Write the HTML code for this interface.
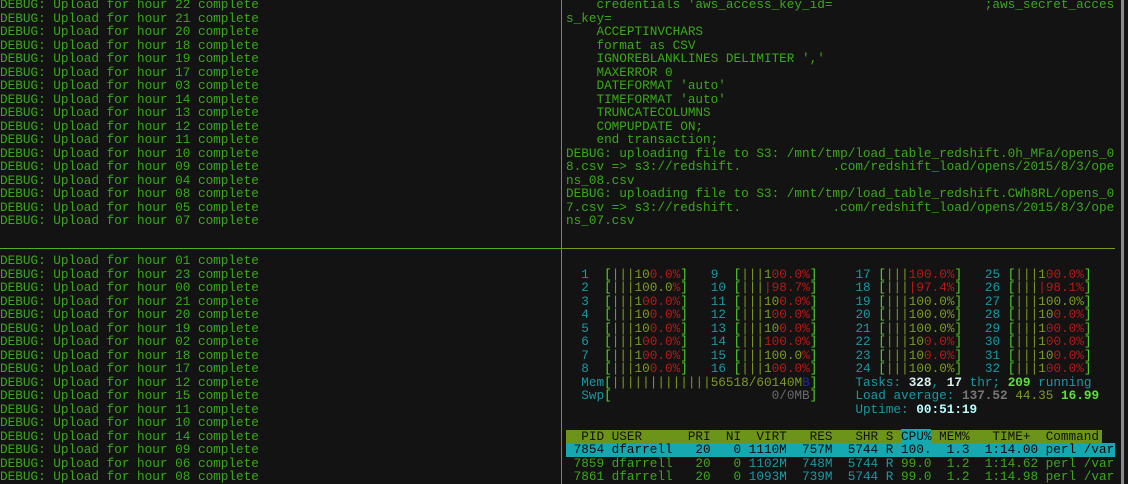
<!DOCTYPE html>
<html><head><meta charset="utf-8"><style>
html,body{margin:0;padding:0;background:#131313;width:1128px;height:484px;overflow:hidden}
.p{position:absolute;font-family:"Liberation Mono",monospace;font-size:12.7px;line-height:13.5px;white-space:pre;color:#3aa81a}
b,i,u,s,em,strong{font-weight:normal;font-style:normal;text-decoration:none}
b{color:#55d22a} i{color:#7c9a22} u{color:#b81818} .c{color:#1a98a3} .t{color:#1a98a3}
.wb{color:#d8f0f0;font-weight:bold} .gb{color:#5ee03a;font-weight:bold} .gr{color:#777;font-weight:bold} .ol{color:#7c9a22} .bl{color:#1a2a9a} .gy{color:#6a6a6a}
.hdr{background:#6c9418;color:#111;display:inline-block;width:536px}
.hdr .cp{background:#16a8b0}
.sel{background:#16a8b0;color:#0a0a0a;display:inline-block;width:549px}
</style></head><body>
<div style="position:absolute;left:561px;top:0;width:1px;height:484px;background:#6a9a1a"></div>
<div style="position:absolute;left:0;top:248px;width:561px;height:1px;background:#4cb31c"></div>
<div style="position:absolute;left:562px;top:248px;width:553px;height:1px;background:#7a9a1e"></div>
<div style="position:absolute;left:1121px;top:0;width:3px;height:484px;background:#8a8a8a"></div>

<div class="p" style="left:0;top:-1.75px">DEBUG: Upload for hour 22 complete
DEBUG: Upload for hour 21 complete
DEBUG: Upload for hour 20 complete
DEBUG: Upload for hour 18 complete
DEBUG: Upload for hour 19 complete
DEBUG: Upload for hour 17 complete
DEBUG: Upload for hour 03 complete
DEBUG: Upload for hour 14 complete
DEBUG: Upload for hour 13 complete
DEBUG: Upload for hour 12 complete
DEBUG: Upload for hour 11 complete
DEBUG: Upload for hour 10 complete
DEBUG: Upload for hour 09 complete
DEBUG: Upload for hour 04 complete
DEBUG: Upload for hour 08 complete
DEBUG: Upload for hour 05 complete
DEBUG: Upload for hour 07 complete</div>

<div class="p" style="left:566px;top:-1.75px">    credentials 'aws_access_key_id=                    ;aws_secret_acces
s_key=
    ACCEPTINVCHARS
    format as CSV
    IGNOREBLANKLINES DELIMITER ','
    MAXERROR 0
    DATEFORMAT 'auto'
    TIMEFORMAT 'auto'
    TRUNCATECOLUMNS
    COMPUPDATE ON;
    end transaction;
DEBUG: uploading file to S3: /mnt/tmp/load_table_redshift.0h_MFa/opens_0
8.csv =&gt; s3://redshift.            .com/redshift_load/opens/2015/8/3/ope
ns_08.csv
DEBUG: uploading file to S3: /mnt/tmp/load_table_redshift.CWh8RL/opens_0
7.csv =&gt; s3://redshift.            .com/redshift_load/opens/2015/8/3/ope
ns_07.csv</div>

<div class="p" style="left:0;top:254.25px">DEBUG: Upload for hour 01 complete
DEBUG: Upload for hour 23 complete
DEBUG: Upload for hour 00 complete
DEBUG: Upload for hour 21 complete
DEBUG: Upload for hour 20 complete
DEBUG: Upload for hour 19 complete
DEBUG: Upload for hour 02 complete
DEBUG: Upload for hour 18 complete
DEBUG: Upload for hour 17 complete
DEBUG: Upload for hour 12 complete
DEBUG: Upload for hour 15 complete
DEBUG: Upload for hour 11 complete
DEBUG: Upload for hour 10 complete
DEBUG: Upload for hour 14 complete
DEBUG: Upload for hour 09 complete
DEBUG: Upload for hour 06 complete
DEBUG: Upload for hour 08 complete</div>

<div class="p" style="left:566px;top:254.25px">
<span class="c">  1  </span><b>[</b><i>|||10</i><u>0.0%</u><b>]</b>   <span class="c">9  </span><b>[</b><i>|||1</i><u>00.0%</u><b>]</b>     <span class="c">17 </span><b>[</b><i>|||</i><u>100.0%</u><b>]</b>   <span class="c">25 </span><b>[</b><i>|||1</i><u>00.0%</u><b>]</b>
<span class="c">  2  </span><b>[</b><i>|||100.0</i><u>%</u><b>]</b>   <span class="c">10 </span><b>[</b><i>|||</i><u>|98.7%</u><b>]</b>     <span class="c">18 </span><b>[</b><i>|||</i><u>|97.4%</u><b>]</b>   <span class="c">26 </span><b>[</b><i>|||</i><u>|98.1%</u><b>]</b>
<span class="c">  3  </span><b>[</b><i>|||1</i><u>00.0%</u><b>]</b>   <span class="c">11 </span><b>[</b><i>|||10</i><u>0.0%</u><b>]</b>     <span class="c">19 </span><b>[</b><i>|||100.0%</i><b>]</b>   <span class="c">27 </span><b>[</b><i>|||100.0%</i><b>]</b>
<span class="c">  4  </span><b>[</b><i>|||10</i><u>0.0%</u><b>]</b>   <span class="c">12 </span><b>[</b><i>|||1</i><u>00.0%</u><b>]</b>     <span class="c">20 </span><b>[</b><i>|||100.0%</i><b>]</b>   <span class="c">28 </span><b>[</b><i>|||10</i><u>0.0%</u><b>]</b>
<span class="c">  5  </span><b>[</b><i>|||10</i><u>0.0%</u><b>]</b>   <span class="c">13 </span><b>[</b><i>|||10</i><u>0.0%</u><b>]</b>     <span class="c">21 </span><b>[</b><i>|||100.0%</i><b>]</b>   <span class="c">29 </span><b>[</b><i>|||1</i><u>00.0%</u><b>]</b>
<span class="c">  6  </span><b>[</b><i>|||1</i><u>00.0%</u><b>]</b>   <span class="c">14 </span><b>[</b><i>|||</i><u>100.0%</u><b>]</b>     <span class="c">22 </span><b>[</b><i>|||10</i><u>0.0%</u><b>]</b>   <span class="c">30 </span><b>[</b><i>|||1</i><u>00.0%</u><b>]</b>
<span class="c">  7  </span><b>[</b><i>|||1</i><u>00.0%</u><b>]</b>   <span class="c">15 </span><b>[</b><i>|||100.0</i><u>%</u><b>]</b>     <span class="c">23 </span><b>[</b><i>|||10</i><u>0.0%</u><b>]</b>   <span class="c">31 </span><b>[</b><i>|||10</i><u>0.0%</u><b>]</b>
<span class="c">  8  </span><b>[</b><i>|||10</i><u>0.0%</u><b>]</b>   <span class="c">16 </span><b>[</b><i>|||1</i><u>00.0%</u><b>]</b>     <span class="c">24 </span><b>[</b><i>|||100.0%</i><b>]</b>   <span class="c">32 </span><b>[</b><i>|||1</i><u>00.0%</u><b>]</b>
<span class="c">  Mem</span><b>[</b><i>|||||||||||||</i><span class="ol">56518/60140M</span><span class="bl">B</span><b>]</b>     <span class="t">Tasks: </span><span class="wb">328</span><span class="t">, </span><span class="wb">17</span><span class="t"> thr; </span><span class="gb">209</span><span class="t"> running</span>
<span class="c">  Swp</span><b>[</b>                     <span class="gy">0/0MB</span><b>]</b>     <span class="t">Load average: </span><span class="gr">137.52</span> <span class="ol">44.35</span> <span class="gb">16.99</span>
                                      <span class="t">Uptime: </span><span class="wb" style="color:#bff">00:51:19</span>

<span class="hdr">  PID USER      PRI  NI  VIRT   RES   SHR S <span class="cp">CPU%</span> MEM%   TIME+  Command</span>
<span class="sel"> 7854 dfarrell   20   0 1110M  757M  5744 R 100.  1.3  1:14.00 perl /var</span>
 7859 dfarrell   20   0 <span class="c">1102M  748M  5744 R</span> 99.0  1.2  1:14.62 perl /var
 7861 dfarrell   20   0 <span class="c">1093M  739M  5744 R</span> 99.0  1.2  1:14.98 perl /var</div>
</body></html>
